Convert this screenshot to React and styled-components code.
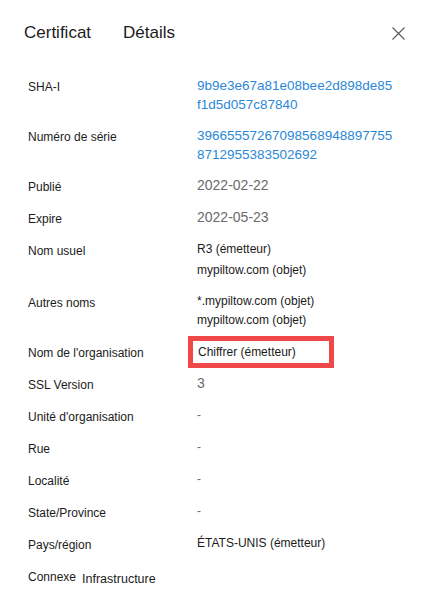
import React from "react";
import styled, { createGlobalStyle } from "styled-components";

const Global = createGlobalStyle`
  html, body { margin: 0; padding: 0; background: #ffffff; }
  body { font-family: "Liberation Sans", Arial, sans-serif; color: #1b1b1b; }
`;

const Page = styled.div`
  width: 427px;
  min-height: 604px;
  box-sizing: border-box;
  padding-top: 21px;
  background: #fff;
`;

const Header = styled.div`
  display: flex;
  align-items: center;
  height: 24px;
  padding: 0 22px 0 24px;
`;

const Tabs = styled.div`
  display: flex;
  gap: 32px;
  flex: 1;
`;

const Tab = styled.div`
  font-size: 17px;
  line-height: 24px;
  color: #1b1b1b;
`;

const CloseButton = styled.button`
  border: 0;
  background: none;
  padding: 0;
  width: 13px;
  height: 13px;
  display: flex;
  cursor: pointer;
`;

const List = styled.div`
  margin-top: 25px;
  padding-left: 28px;
  display: grid;
  grid-template-columns: 169px 1fr;
`;

const Label = styled.div`
  padding-top: 8px;
  font-size: 12px;
  line-height: 19px;
  color: #1b1b1b;
  min-height: 32px;
  box-sizing: border-box;
`;

const LabelTail = styled.span`
  font-size: 12.5px;
  margin-left: 6px;
  position: relative;
  top: 2px;
`;

const Value = styled.div`
  padding: 6px 0;
  min-height: 32px;
  box-sizing: border-box;
  display: flex;
  flex-direction: column;
  gap: ${(p) => p.$gap || 0}px;
`;

const Line = styled.div`
  line-height: 19px;
  font-size: ${(p) =>
    p.$kind === "link" ? "13.5px" : p.$kind === "muted" ? "14px" : p.$kind === "dash" ? "12px" : "12px"};
  color: ${(p) =>
    p.$kind === "link" ? "#2b88d8" : p.$kind === "muted" || p.$kind === "dash" ? "#6b6b6b" : "#1b1b1b"};
  white-space: nowrap;
`;

const HighlightCell = styled.div`
  min-height: 32px;
`;

const Highlight = styled.div`
  box-sizing: border-box;
  width: 146px;
  height: 32px;
  margin-left: -9px;
  border: 5px solid #f04848;
  padding-left: 5px;
  display: flex;
  align-items: center;
  font-size: 12px;
  color: #1b1b1b;
  white-space: nowrap;
`;

const rows = [
  { label: "SHA-I", kind: "link", lines: ["9b9e3e67a81e08bee2d898de85", "f1d5d057c87840"] },
  { label: "Numéro de série", kind: "link", lines: ["39665557267098568948897755", "8712955383502692"] },
  { label: "Publié", kind: "muted", lines: ["2022-02-22"] },
  { label: "Expire", kind: "muted", lines: ["2022-05-23"] },
  { label: "Nom usuel", kind: "text", gap: 2, lines: ["R3 (émetteur)", "mypiltow.com (objet)"] },
  { label: "Autres noms", kind: "text", lines: ["*.mypiltow.com (objet)", "mypiltow.com (objet)"] },
  { label: "Nom de l'organisation", highlight: "Chiffrer (émetteur)" },
  { label: "SSL Version", kind: "muted", lines: ["3"] },
  { label: "Unité d'organisation", kind: "dash", lines: ["-"] },
  { label: "Rue", kind: "dash", lines: ["-"] },
  { label: "Localité", kind: "dash", lines: ["-"] },
  { label: "State/Province", kind: "dash", lines: ["-"] },
  { label: "Pays/région", kind: "text", lines: ["ÉTATS-UNIS (émetteur)"] },
];

function CloseIcon() {
  return (
    <svg width="13" height="13" viewBox="0 0 13 13" fill="none">
      <path d="M0.5 0.5 L12.5 12.5 M12.5 0.5 L0.5 12.5" stroke="#5a5a5a" strokeWidth="1.1" />
    </svg>
  );
}

export default function App() {
  return (
    <>
      <Global />
      <Page>
        <Header>
          <Tabs>
            <Tab>Certificat</Tab>
            <Tab>Détails</Tab>
          </Tabs>
          <CloseButton aria-label="Fermer">
            <CloseIcon />
          </CloseButton>
        </Header>
        <List>
          {rows.map((r) => (
            <React.Fragment key={r.label}>
              <Label>{r.label}</Label>
              {r.highlight ? (
                <HighlightCell>
                  <Highlight>{r.highlight}</Highlight>
                </HighlightCell>
              ) : (
                <Value $gap={r.gap}>
                  {r.lines.map((l, i) => (
                    <Line key={i} $kind={r.kind}>
                      {l}
                    </Line>
                  ))}
                </Value>
              )}
            </React.Fragment>
          ))}
          <Label>
            Connexe<LabelTail>Infrastructure</LabelTail>
          </Label>
          <Value />
        </List>
      </Page>
    </>
  );
}
